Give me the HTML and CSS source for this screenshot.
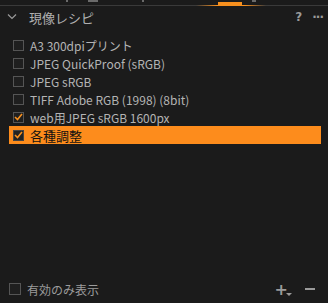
FILE: index.html
```html
<!DOCTYPE html>
<html lang="ja">
<head>
    <meta charset="UTF-8">
    <title>現像レシピ</title>
    <link rel="stylesheet" href="styles.css">
</head>
<body>
    <div class="panel">
        <div class="tabstrip">
            <span class="tab-mark m1"></span>
            <span class="tab-mark m2"></span>
            <span class="tab-mark m3"></span>
            <span class="tab-mark m4"></span>
            <span class="tab-active"></span>
            <span class="tab-glow"></span>
        </div>
        <div class="header">
            <svg class="chevron" width="10" height="6" viewBox="0 0 10 6">
                <path d="M1 0.5 L5 4.5 L9 0.5" fill="none" stroke="#9a9a9a" stroke-width="1.2"/>
            </svg>
            <span class="title">現像レシピ</span>
            <span class="help">?</span>
            <span class="more">···</span>
        </div>
        <ul class="recipes">
            <li class="recipe"><span class="box"></span>A3 300dpiプリント</li>
            <li class="recipe"><span class="box"></span>JPEG QuickProof (sRGB)</li>
            <li class="recipe"><span class="box"></span>JPEG sRGB</li>
            <li class="recipe"><span class="box"></span>TIFF Adobe RGB (1998) (8bit)</li>
            <li class="recipe"><span class="box checked"><svg width="9" height="8" viewBox="0 0 9 8"><path d="M1 4 L3.5 6.5 L8 1" fill="none" stroke="#f7901e" stroke-width="1.6"/></svg></span>web用JPEG sRGB 1600px</li>
            <li class="recipe selected"><span class="box checked"><svg width="9" height="8" viewBox="0 0 9 8"><path d="M1 4 L3.5 6.5 L8 1" fill="none" stroke="#f7901e" stroke-width="1.6"/></svg></span>各種調整</li>
        </ul>
        <div class="footer">
            <span class="box big"></span>
            <span class="filter">有効のみ表示</span>
            <span class="add">+<span class="caret"></span></span>
            <span class="remove"></span>
        </div>
    </div>
</body>
</html>
```

FILE: styles.css
```css
body {
    margin: 0;
    background-color: #1b1b1b;
    font-family: "Noto Sans CJK JP", "Noto Sans", sans-serif;
    color: #b8b8b8;
}
.panel {
    width: 328px;
    height: 303px;
    display: flex;
    flex-direction: column;
}
.tabstrip {
    position: relative;
    height: 5px;
    border-bottom: 1px solid #3a3a3a;
}
.tab-mark {
    position: absolute;
    top: 0;
    height: 2px;
    background-color: #6a6a6a;
}
.m1 { left: 66px; width: 2px; }
.m2 { left: 88px; width: 10px; }
.m3 { left: 142px; width: 2px; }
.m4 { left: 252px; width: 4px; }
.tab-active {
    position: absolute;
    left: 218px;
    top: 2px;
    width: 24px;
    height: 3px;
    background-color: #f7901e;
}
.tab-glow {
    position: absolute;
    left: 196px;
    bottom: -1px;
    width: 70px;
    height: 1px;
    background: linear-gradient(to right, rgba(247,144,30,0), #f7901e 30%, #f7901e 70%, rgba(247,144,30,0));
}
.header {
    display: flex;
    align-items: center;
    height: 22px;
    padding: 0 5px 0 7px;
}
.chevron {
    margin-right: 12px;
}
.title {
    font-size: 13px;
    color: #b0b0b0;
    flex: 1;
}
.help {
    font-family: "DejaVu Sans", sans-serif;
    font-weight: bold;
    font-size: 12px;
    color: #9a9a9a;
    margin-right: 10px;
}
.more {
    font-family: "DejaVu Sans", sans-serif;
    font-weight: bold;
    font-size: 12px;
    color: #9a9a9a;
    letter-spacing: -1px;
}
.recipes {
    list-style: none;
    margin: 8px 0 0 0;
    padding: 0 7px 0 9px;
    flex: 1;
}
.recipe {
    display: flex;
    align-items: center;
    height: 18px;
    font-size: 12px;
    color: #b4b4b4;
    white-space: nowrap;
}
.recipe .box {
    margin: 0 6px 0 4px;
}
.box {
    box-sizing: border-box;
    width: 11px;
    height: 11px;
    border: 1px solid #555;
    background-color: #1f1f1f;
    display: flex;
    align-items: center;
    justify-content: center;
}
.box.big {
    width: 12px;
    height: 12px;
}
.recipe.selected {
    background-color: #fd8c1c;
    color: #111;
    font-size: 13px;
}
.recipe.selected .box {
    background-color: #222;
    border-color: #444;
}
.footer {
    display: flex;
    align-items: center;
    height: 28px;
    padding: 0 13px 0 9px;
}
.filter {
    flex: 1;
    font-size: 12px;
    color: #9c9c9c;
    margin-left: 6px;
}
.add {
    position: relative;
    font-family: "DejaVu Sans", sans-serif;
    font-weight: bold;
    font-size: 16px;
    color: #9a9a9a;
    margin-right: 17px;
}
.caret {
    position: absolute;
    right: -4px;
    bottom: 3px;
    border-left: 3px solid transparent;
    border-right: 3px solid transparent;
    border-top: 3px solid #9a9a9a;
}
.remove {
    width: 10px;
    height: 2px;
    background-color: #9a9a9a;
}
```
